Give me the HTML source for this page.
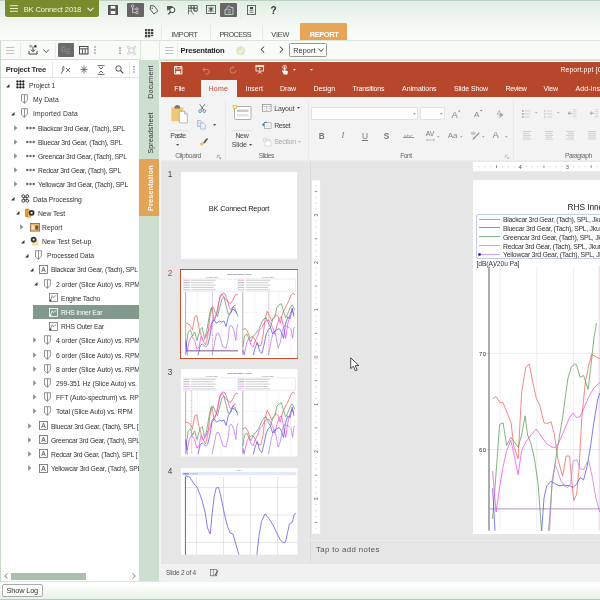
<!DOCTYPE html>
<html><head><meta charset="utf-8"><title>BK Connect 2018</title>
<style>
*{box-sizing:border-box;margin:0;padding:0}
html,body{width:600px;height:600px;overflow:hidden;background:#fff}
body{font-family:"Liberation Sans",sans-serif;font-size:7px;color:#333;position:relative}
.abs,.ic,.t{position:absolute}
.ic{overflow:visible}
.t{white-space:nowrap}
#w{position:absolute;left:0;top:0;width:600px;height:600px;will-change:transform}
</style></head><body><div id="w">
<div class="abs" style="left:0px;top:0px;width:600px;height:40px;background:linear-gradient(#e1eee3 0,#eaf4ec 35%,#f6faf6 75%,#fafcfa 100%);"></div>
<div class="abs" style="left:0px;top:0px;width:600px;height:1px;background:#bfd0c0;"></div>
<div class="abs" style="left:5px;top:0px;width:94px;height:17px;background:#788b2f;border-radius:0 0 2.5px 2.5px"></div>
<svg class="ic" style="left:10px;top:5px" width="8" height="7" viewBox="0 0 8 7"><path d="M0 .7H8M0 3.5H8M0 6.3H8" stroke="#e9efd3" stroke-width="1"/></svg>
<div class="t" style="left:23.70px;top:3.60px;font-size:7.6px;line-height:12px;color:#f1f5e2;letter-spacing:-0.138px;">BK Connect 2018</div>
<svg class="ic" style="left:87.3px;top:7.2px" width="6.5" height="5" viewBox="0 0 6.5 5"><path d="M.6 .8L3.5 3.8L6.4 .8" fill="none" stroke="#f1f5e2" stroke-width="1.1"/></svg>
<div class="abs" style="left:124.5px;top:1px;width:1px;height:18px;background:#e6efe4;"></div>
<div class="abs" style="left:181.5px;top:1px;width:1px;height:18px;background:#e6efe4;"></div>
<div class="abs" style="left:240px;top:1px;width:1px;height:18px;background:#e6efe4;"></div>
<div class="abs" style="left:262px;top:1px;width:1px;height:18px;background:#e6efe4;"></div>
<svg class="ic" style="left:108.3px;top:4.9px" width="10" height="10" viewBox="0 0 10 10"><rect x=".5" y=".5" width="9" height="9" fill="#f4f9f4" stroke="#555" stroke-width="1"/><rect x=".5" y=".5" width="2.2" height="9" fill="#555"/><rect x="7.3" y=".5" width="2.2" height="9" fill="#555"/><rect x="2.5" y="3.6" width="5" height="2.4" fill="#555"/></svg>
<div class="abs" style="left:127px;top:2.5px;width:16.5px;height:14px;background:#666;border-radius:1px"></div>
<svg class="ic" style="left:130px;top:4px" width="10" height="11" viewBox="0 0 10 11"><circle cx="2.5" cy="2" r="1.3" fill="none" stroke="#ddd" stroke-width=".7"/><circle cx="7" cy="5" r="1.2" fill="none" stroke="#ddd" stroke-width=".7"/><circle cx="7" cy="8.6" r="1.2" fill="none" stroke="#ddd" stroke-width=".7"/><path d="M2.5 3.3V8.6H5.8M2.5 5H5.8" fill="none" stroke="#ddd" stroke-width=".7"/></svg>
<svg class="ic" style="left:148.5px;top:4.5px" width="10" height="10" viewBox="0 0 10 10"><path d="M1 1H4.6L9 5.4L5.4 9L1 4.6Z" fill="none" stroke="#555" stroke-width=".9" transform="rotate(8 5 5)"/><circle cx="3.2" cy="3.2" r=".8" fill="#555"/></svg>
<svg class="ic" style="left:166px;top:4.5px" width="11" height="10" viewBox="0 0 11 10"><path d="M1 1H6.5V4.5H3L1.4 6V4.5H1Z" fill="#555"/><circle cx="6.3" cy="5" r="2.6" fill="#f4f9f3" stroke="#444" stroke-width="1"/><path d="M4.6 7L2.2 9.4" stroke="#444" stroke-width="1.2"/></svg>
<svg class="ic" style="left:188.2px;top:4.6px" width="10" height="10" viewBox="0 0 10 10"><path d="M.5 .5H3.2V3.2H.5ZM3.2 .5H6V3.2H3.2ZM6 .5H9.3V3.2H6ZM.5 3.2H3.2V6H.5ZM3.2 3.2H6V6M6 3.2H9.3V6H6ZM.5 6V9.5M3.2 6L5.4 9.4M6 6H9.3" fill="none" stroke="#555" stroke-width=".8"/></svg>
<svg class="ic" style="left:205.9px;top:5px" width="9.6" height="8.8" viewBox="0 0 9.6 8.8"><rect x=".5" y=".5" width="9" height="8" fill="none" stroke="#555" stroke-width=".9"/><path d="M2 3H8M2 6H8M5 1.5V7.5" stroke="#555" stroke-width=".7"/><rect x="3.6" y="3" width="2.8" height="2.6" fill="#555"/></svg>
<div class="abs" style="left:220px;top:2.5px;width:17px;height:14px;background:#666;border-radius:1px"></div>
<svg class="ic" style="left:223.5px;top:4.5px" width="10" height="10" viewBox="0 0 10 10"><path d="M1 9.5V4.5H3V2.5L5 .8L7 2.5H9V9.5Z" fill="none" stroke="#ddd" stroke-width=".8"/><path d="M3.6 4.5H7M3.6 6.2H7M3.6 7.9H7" stroke="#ccc" stroke-width=".6"/></svg>
<svg class="ic" style="left:246.5px;top:4.5px" width="9" height="10" viewBox="0 0 9 10"><rect x=".5" y=".5" width="8" height="9" fill="none" stroke="#555" stroke-width=".9"/><rect x="3" y="2" width="3" height="2.2" fill="#444"/><path d="M2.6 5.6H6.4M2.6 7.4H6.4" stroke="#555" stroke-width=".7"/></svg>
<div class="t" style="left:270.40px;top:5.20px;font-size:10px;line-height:12px;color:#333;letter-spacing:0.000px;font-weight:bold;">?</div>
<svg class="ic" style="left:145.2px;top:28.8px" width="8.2" height="8.2" viewBox="0 0 8.2 8.2"><rect x="0" y="0" width="2.3" height="2.3" fill="#444"/><rect x="0" y="3" width="2.3" height="2.3" fill="#444"/><rect x="0" y="6" width="2.3" height="2.3" fill="#444"/><rect x="3" y="0" width="2.3" height="2.3" fill="#444"/><rect x="3" y="3" width="2.3" height="2.3" fill="#444"/><rect x="3" y="6" width="2.3" height="2.3" fill="#444"/><rect x="6" y="0" width="2.3" height="2.3" fill="#444"/><rect x="6" y="3" width="2.3" height="2.3" fill="#444"/><rect x="6" y="6" width="2.3" height="1.2" fill="#444"/></svg>
<div class="abs" style="left:160.5px;top:25px;width:1px;height:15px;background:#e3ece1;"></div>
<div class="abs" style="left:209.5px;top:25px;width:1px;height:15px;background:#e3ece1;"></div>
<div class="abs" style="left:261.5px;top:25px;width:1px;height:15px;background:#e3ece1;"></div>
<div class="t" style="left:171.30px;top:28.60px;font-size:7.3px;line-height:12px;color:#444;letter-spacing:-0.293px;">IMPORT</div>
<div class="t" style="left:219.60px;top:28.60px;font-size:7.3px;line-height:12px;color:#444;letter-spacing:-0.600px;">PROCESS</div>
<div class="t" style="left:271.30px;top:28.60px;font-size:7.3px;line-height:12px;color:#444;letter-spacing:-0.164px;">VIEW</div>
<div class="abs" style="left:299.7px;top:22.5px;width:47px;height:18px;background:#e6a456;border-radius:1px 1px 0 0"></div>
<div class="t" style="left:309.80px;top:28.80px;font-size:7.4px;line-height:12px;color:#fff;letter-spacing:-0.373px;font-weight:bold;">REPORT</div>
<div class="abs" style="left:0px;top:40px;width:600px;height:1px;background:#d9e5d7;"></div>
<div class="abs" style="left:0px;top:41px;width:600px;height:19px;background:#f8fbf8;"></div>
<div class="abs" style="left:0px;top:59px;width:140px;height:1px;background:#d2e1ce;"></div>
<div class="abs" style="left:159px;top:59px;width:441px;height:1.6px;background:linear-gradient(#e3e9e2,#cfd6cf);"></div>
<div class="abs" style="left:139.5px;top:41px;width:1px;height:19px;background:#dfe9dc;"></div>
<div class="abs" style="left:158.5px;top:41px;width:1px;height:19px;background:#dfe9dc;"></div>
<svg class="ic" style="left:5.5px;top:46.5px" width="8.5" height="7" viewBox="0 0 8.5 7"><path d="M0 .5H8.5M0 3.5H8.5M0 6.5H8.5" stroke="#b5b5b5" stroke-width=".8"/></svg>
<div class="abs" style="left:19.5px;top:43px;width:1px;height:15px;background:#e6ece4;"></div>
<svg class="ic" style="left:28px;top:45px" width="10" height="10" viewBox="0 0 10 10"><path d="M1 6V9H9V6" fill="none" stroke="#444" stroke-width="1"/><path d="M5 1.5V6.5M2.8 4.6L5 6.8L7.2 4.6" fill="none" stroke="#444" stroke-width="1"/><circle cx="2.6" cy="1.2" r="1" fill="none" stroke="#444" stroke-width=".6"/><rect x="6.3" y=".2" width="2.2" height="2.2" fill="#222"/></svg>
<svg class="ic" style="left:43px;top:48.6px" width="6.5" height="4.5" viewBox="0 0 6.5 4.5"><path d="M.5 .6L3.25 3.5L6 .6" fill="none" stroke="#444" stroke-width=".9"/></svg>
<div class="abs" style="left:55px;top:43px;width:1px;height:15px;background:#e6ece4;"></div>
<div class="abs" style="left:57.5px;top:43px;width:16.5px;height:13.5px;background:#6b6b6b;border-radius:1px"></div>
<svg class="ic" style="left:61px;top:45.5px" width="10" height="9" viewBox="0 0 10 9"><path d="M1 1H4M3 3.2H9M3 5.4H9M5 7.6H9M1 1V5.4H2.5" fill="none" stroke="#999" stroke-width=".7"/></svg>
<svg class="ic" style="left:79px;top:45.8px" width="9.5" height="8.5" viewBox="0 0 9.5 8.5"><rect x=".5" y=".5" width="8.5" height="7.5" fill="none" stroke="#444" stroke-width="1"/><path d="M.5 2.8H9M3.4 2.8V8M6.2 2.8V8" stroke="#444" stroke-width=".9"/></svg>
<svg class="ic" style="left:93.5px;top:46px" width="2" height="8" viewBox="0 0 2 8"><circle cx="1" cy="1" r=".8" fill="#777"/><circle cx="1" cy="4" r=".8" fill="#777"/><circle cx="1" cy="7" r=".8" fill="#777"/></svg>
<svg class="ic" style="left:118.5px;top:46.5px" width="2" height="7" viewBox="0 0 2 7"><circle cx="1" cy="1" r=".75" fill="#555"/><circle cx="1" cy="3.5" r=".75" fill="#888"/><circle cx="1" cy="6" r=".75" fill="#555"/></svg>
<svg class="ic" style="left:126.5px;top:45.5px" width="9" height="9" viewBox="0 0 9 9"><rect x="2" y="2" width="5" height="5" fill="none" stroke="#bbb" stroke-width=".8"/><path d="M.4 2.4V.4H2.4M6.6 .4H8.6V2.4M8.6 6.6V8.6H6.6M2.4 8.6H.4V6.6" fill="none" stroke="#ccc" stroke-width=".8"/></svg>
<svg class="ic" style="left:164.5px;top:46.5px" width="8.5" height="7" viewBox="0 0 8.5 7"><path d="M0 .5H8.5M0 3.5H8.5M0 6.5H8.5" stroke="#b5b5b5" stroke-width=".8"/></svg>
<div class="abs" style="left:176.5px;top:43px;width:1px;height:15px;background:#e9efe7;"></div>
<div class="t" style="left:180.50px;top:44.80px;font-size:7.6px;line-height:12px;color:#222;letter-spacing:-0.170px;font-weight:bold;">Presentation</div>
<svg class="ic" style="left:235.5px;top:45.5px" width="9.5" height="9.5" viewBox="0 0 9.5 9.5"><circle cx="4.75" cy="4.75" r="4.5" fill="#dce8c6"/><path d="M2.6 4.9L4.2 6.5L7 3.3" fill="none" stroke="#f7faef" stroke-width="1.1"/></svg>
<svg class="ic" style="left:259.6px;top:46.2px" width="5" height="7" viewBox="0 0 5 7"><path d="M4.2 .6L1 3.5L4.2 6.4" fill="none" stroke="#333" stroke-width="1"/></svg>
<svg class="ic" style="left:278.7px;top:46.2px" width="5" height="7" viewBox="0 0 5 7"><path d="M.8 .6L4 3.5L.8 6.4" fill="none" stroke="#333" stroke-width="1"/></svg>
<div class="abs" style="left:289.3px;top:43px;width:37.5px;height:13.8px;background:#fff;border:1px solid #999;border-radius:1.5px"></div>
<div class="t" style="left:293.20px;top:44.60px;font-size:7.3px;line-height:12px;color:#333;letter-spacing:0.098px;">Report</div>
<svg class="ic" style="left:318.3px;top:48.2px" width="6" height="4.5" viewBox="0 0 6 4.5"><path d="M.5 .6L3 3.4L5.5 .6" fill="none" stroke="#333" stroke-width=".9"/></svg>
<div class="abs" style="left:0px;top:60px;width:139px;height:18px;background:#fff;"></div>
<div class="t" style="left:5.80px;top:63.50px;font-size:7.7px;line-height:12px;color:#333;letter-spacing:-0.315px;font-weight:bold;">Project Tree</div>
<div class="abs" style="left:0px;top:77.3px;width:139px;height:0.9px;background:#dce8da;"></div>
<div class="abs" style="left:51.5px;top:62px;width:1px;height:15px;background:#e3e9e1;"></div>
<div class="abs" style="left:128.5px;top:62px;width:1px;height:15px;background:#e3e9e1;"></div>
<svg class="ic" style="left:60px;top:64.5px" width="11" height="10" viewBox="0 0 11 10"><path d="M1 9L3 5.5M3 5.5C2 4 2.6 2.2 3.6 1.2C4.2 2.6 4.2 4.4 3 5.5" fill="none" stroke="#444" stroke-width=".7"/><path d="M6 3L10 7.2M10 3L6 7.2" stroke="#444" stroke-width=".8"/></svg>
<svg class="ic" style="left:79.5px;top:64.8px" width="8" height="9" viewBox="0 0 8 9"><path d="M4 .3V8.7M.4 4.5H7.6M1.4 1.6L6.6 7.4M6.6 1.6L1.4 7.4" stroke="#444" stroke-width=".65"/></svg>
<svg class="ic" style="left:97px;top:64.5px" width="8" height="10" viewBox="0 0 8 10"><path d="M.5 .6H7.5M.5 9.4H7.5" stroke="#444" stroke-width=".8"/><path d="M2 2L4 4L6 2M2 8L4 6L6 8" fill="none" stroke="#444" stroke-width=".8"/></svg>
<svg class="ic" style="left:114.5px;top:65px" width="9" height="9" viewBox="0 0 9 9"><circle cx="3.5" cy="3.5" r="2.7" fill="none" stroke="#444" stroke-width=".9"/><path d="M5.5 5.5L8.3 8.3" stroke="#444" stroke-width="1.1"/></svg>
<svg class="ic" style="left:133px;top:66px" width="2" height="7" viewBox="0 0 2 7"><circle cx="1" cy=".9" r=".8" fill="#888"/><circle cx="1" cy="3.5" r=".8" fill="#888"/><circle cx="1" cy="6.1" r=".8" fill="#888"/></svg>
<div class="abs" style="left:0;top:78px;width:139px;height:492px;overflow:hidden;background:#fff"><div class="abs" style="left:0;top:-78px;width:300px;height:600px">
<svg class="ic" style="left:6.1000000000000005px;top:83.5px" width="3.6" height="3.6" viewBox="0 0 3.6 3.6"><path d="M3.5 .1V3.5H.1Z" fill="#333"/></svg>
<svg class="ic" style="left:16.4px;top:80.4px" width="8.8" height="8.8" viewBox="0 0 9.4 9.4"><circle cx="1.5" cy="1.5" r="1.2" fill="#222"/><circle cx="1.5" cy="4.7" r="1.2" fill="#222"/><circle cx="1.5" cy="7.9" r="1.2" fill="#222"/><circle cx="4.7" cy="1.5" r="1.2" fill="#222"/><circle cx="4.7" cy="4.7" r="1.2" fill="#222"/><circle cx="4.7" cy="7.9" r="1.2" fill="#222"/><circle cx="7.9" cy="1.5" r="1.2" fill="#222"/><circle cx="7.9" cy="4.7" r="1.2" fill="#222"/><circle cx="7.9" cy="7.9" r="1.2" fill="#222"/><path d="M1.5 1.5H8M1.5 4.7H8M1.5 7.9H8M1.5 1.5V8M4.7 1.5V8M7.9 1.5V8" stroke="#222" stroke-width=".5"/></svg>
<div class="t" style="left:29.00px;top:80.00px;font-size:6.8px;line-height:12px;color:#333;letter-spacing:-0.065px;">Project 1</div>

<svg class="ic" style="left:20.5px;top:94.2px" width="7" height="10" viewBox="0 0 7 10"><path d="M.5 .7H3.5V9.3L.5 7Z M3.5 .7H6.4V6L3.5 9.3" fill="none" stroke="#777" stroke-width=".8" stroke-linejoin="round"/></svg>
<div class="t" style="left:33.00px;top:94.19px;font-size:6.8px;line-height:12px;color:#333;letter-spacing:0.062px;">My Data</div>
<svg class="ic" style="left:10.7px;top:111.9px" width="3.6" height="3.6" viewBox="0 0 3.6 3.6"><path d="M3.5 .1V3.5H.1Z" fill="#333"/></svg>
<svg class="ic" style="left:20.5px;top:108.4px" width="7" height="10" viewBox="0 0 7 10"><path d="M.5 .7H3.5V9.3L.5 7Z M3.5 .7H6.4V6L3.5 9.3" fill="none" stroke="#777" stroke-width=".8" stroke-linejoin="round"/></svg>
<div class="t" style="left:33.00px;top:108.38px;font-size:6.8px;line-height:12px;color:#333;letter-spacing:0.147px;">Imported Data</div>
<svg class="ic" style="left:14.100000000000001px;top:124.5px" width="3.4" height="6" viewBox="0 0 3.4 6"><path d="M.2 .2L3.3 3L.2 5.8Z" fill="#8a8a8a"/></svg>
<svg class="ic" style="left:26px;top:125.6px" width="9" height="4" viewBox="0 0 9 4"><circle cx="1.3" cy="2" r="1.2" fill="#666"/><circle cx="4.5" cy="2" r="1.2" fill="#666"/><circle cx="7.7" cy="2" r="1.2" fill="#666"/></svg>
<div class="t" style="left:38.00px;top:122.57px;font-size:6.8px;line-height:12px;color:#333;letter-spacing:-0.233px;">Blackcar 3rd Gear, (Tach), SPL</div>
<svg class="ic" style="left:14.100000000000001px;top:138.70000000000002px" width="3.4" height="6" viewBox="0 0 3.4 6"><path d="M.2 .2L3.3 3L.2 5.8Z" fill="#8a8a8a"/></svg>
<svg class="ic" style="left:26px;top:139.8px" width="9" height="4" viewBox="0 0 9 4"><circle cx="1.3" cy="2" r="1.2" fill="#666"/><circle cx="4.5" cy="2" r="1.2" fill="#666"/><circle cx="7.7" cy="2" r="1.2" fill="#666"/></svg>
<div class="t" style="left:38.00px;top:136.76px;font-size:6.8px;line-height:12px;color:#333;letter-spacing:-0.223px;">Bluecar 3rd Gear, (Tach), SPL</div>
<svg class="ic" style="left:14.100000000000001px;top:152.8px" width="3.4" height="6" viewBox="0 0 3.4 6"><path d="M.2 .2L3.3 3L.2 5.8Z" fill="#8a8a8a"/></svg>
<svg class="ic" style="left:26px;top:153.9px" width="9" height="4" viewBox="0 0 9 4"><circle cx="1.3" cy="2" r="1.2" fill="#666"/><circle cx="4.5" cy="2" r="1.2" fill="#666"/><circle cx="7.7" cy="2" r="1.2" fill="#666"/></svg>
<div class="t" style="left:38.00px;top:150.95px;font-size:6.8px;line-height:12px;color:#333;letter-spacing:-0.242px;">Greencar 3rd Gear, (Tach), SPL</div>
<svg class="ic" style="left:14.100000000000001px;top:167.0px" width="3.4" height="6" viewBox="0 0 3.4 6"><path d="M.2 .2L3.3 3L.2 5.8Z" fill="#8a8a8a"/></svg>
<svg class="ic" style="left:26px;top:168.1px" width="9" height="4" viewBox="0 0 9 4"><circle cx="1.3" cy="2" r="1.2" fill="#666"/><circle cx="4.5" cy="2" r="1.2" fill="#666"/><circle cx="7.7" cy="2" r="1.2" fill="#666"/></svg>
<div class="t" style="left:38.00px;top:165.14px;font-size:6.8px;line-height:12px;color:#333;letter-spacing:-0.235px;">Redcar 3rd Gear, (Tach), SPL</div>
<svg class="ic" style="left:14.100000000000001px;top:181.20000000000002px" width="3.4" height="6" viewBox="0 0 3.4 6"><path d="M.2 .2L3.3 3L.2 5.8Z" fill="#8a8a8a"/></svg>
<svg class="ic" style="left:26px;top:182.3px" width="9" height="4" viewBox="0 0 9 4"><circle cx="1.3" cy="2" r="1.2" fill="#666"/><circle cx="4.5" cy="2" r="1.2" fill="#666"/><circle cx="7.7" cy="2" r="1.2" fill="#666"/></svg>
<div class="t" style="left:38.00px;top:179.33px;font-size:6.8px;line-height:12px;color:#333;letter-spacing:-0.210px;">Yellowcar 3rd Gear, (Tach), SPL</div>
<svg class="ic" style="left:10.7px;top:197.0px" width="3.6" height="3.6" viewBox="0 0 3.6 3.6"><path d="M3.5 .1V3.5H.1Z" fill="#333"/></svg>
<svg class="ic" style="left:21px;top:194.0px" width="8.5" height="9" viewBox="0 0 8 9"><circle cx="2" cy="2.2" r="1.45" fill="none" stroke="#3a3a3a" stroke-width=".95"/><circle cx="6" cy="2.2" r="1.45" fill="none" stroke="#3a3a3a" stroke-width=".95"/><circle cx="2" cy="6.8" r="1.45" fill="none" stroke="#3a3a3a" stroke-width=".95"/><circle cx="6" cy="6.8" r="1.45" fill="none" stroke="#3a3a3a" stroke-width=".95"/><circle cx="4" cy="4.5" r="1.45" fill="none" stroke="#3a3a3a" stroke-width=".95"/></svg>
<div class="t" style="left:33.00px;top:193.52px;font-size:6.8px;line-height:12px;color:#333;letter-spacing:-0.076px;">Data Processing</div>
<svg class="ic" style="left:15.7px;top:211.2px" width="3.6" height="3.6" viewBox="0 0 3.6 3.6"><path d="M3.5 .1V3.5H.1Z" fill="#333"/></svg>
<svg class="ic" style="left:25px;top:207.7px" width="10" height="10" viewBox="0 0 10 10"><path d="M.5 1H3.6L4.4 2.2V9.4L.5 8.4Z" fill="#e2952c" stroke="#a86a14" stroke-width=".5"/><path d="M3 2.4H6V9.4H3Z" fill="#f0b95e"/><circle cx="6.6" cy="4.8" r="2.9" fill="#2e2e2e"/><circle cx="6.6" cy="4.8" r="1.1" fill="#fff"/></svg>
<div class="t" style="left:38.00px;top:207.71px;font-size:6.8px;line-height:12px;color:#333;letter-spacing:-0.105px;">New Test</div>
<svg class="ic" style="left:19.8px;top:223.8px" width="3.4" height="6" viewBox="0 0 3.4 6"><path d="M.2 .2L3.3 3L.2 5.8Z" fill="#8a8a8a"/></svg>
<svg class="ic" style="left:30px;top:222.9px" width="10" height="8.5" viewBox="0 0 10 8.5"><rect x=".4" y=".4" width="9.2" height="7.7" fill="#e9b96a" stroke="#8a6a3a" stroke-width=".8"/><rect x="1.5" y="2.6" width="3" height="4" fill="#f7e3bd"/><rect x="5.3" y="2.6" width="3" height="4" fill="#6b5536"/></svg>
<div class="t" style="left:42.00px;top:221.90px;font-size:6.8px;line-height:12px;color:#333;letter-spacing:0.015px;">Report</div>
<svg class="ic" style="left:20.7px;top:239.6px" width="3.6" height="3.6" viewBox="0 0 3.6 3.6"><path d="M3.5 .1V3.5H.1Z" fill="#333"/></svg>
<svg class="ic" style="left:30px;top:236.1px" width="9" height="10" viewBox="0 0 9 10"><rect x="2" y="3.5" width="6.5" height="6" fill="#f3dca8"/><circle cx="3.6" cy="3.6" r="2.9" fill="#333"/><circle cx="3.6" cy="3.6" r="1.1" fill="#f4e6c6"/></svg>
<div class="t" style="left:42.00px;top:236.09px;font-size:6.8px;line-height:12px;color:#333;letter-spacing:-0.034px;">New Test Set-up</div>
<svg class="ic" style="left:24.7px;top:253.8px" width="3.6" height="3.6" viewBox="0 0 3.6 3.6"><path d="M3.5 .1V3.5H.1Z" fill="#333"/></svg>
<svg class="ic" style="left:35px;top:250.3px" width="7" height="10" viewBox="0 0 7 10"><path d="M.5 .7H3.5V9.3L.5 7Z M3.5 .7H6.4V6L3.5 9.3" fill="none" stroke="#777" stroke-width=".8" stroke-linejoin="round"/></svg>
<div class="t" style="left:47.00px;top:250.28px;font-size:6.8px;line-height:12px;color:#333;letter-spacing:-0.099px;">Processed Data</div>
<svg class="ic" style="left:29.7px;top:268.0px" width="3.6" height="3.6" viewBox="0 0 3.6 3.6"><path d="M3.5 .1V3.5H.1Z" fill="#333"/></svg>
<svg class="ic" style="left:39px;top:265.0px" width="9" height="9" viewBox="0 0 9 9"><rect x=".5" y=".5" width="8" height="8" fill="none" stroke="#666" stroke-width=".8"/><path d="M2.6 7L4.5 2L6.4 7M3.3 5.3H5.7" fill="none" stroke="#555" stroke-width=".8"/></svg>
<div class="t" style="left:51.00px;top:264.47px;font-size:6.8px;line-height:12px;color:#333;letter-spacing:-0.226px;">Blackcar 3rd Gear, (Tach), SPL [</div>
<svg class="ic" style="left:33.7px;top:282.2px" width="3.6" height="3.6" viewBox="0 0 3.6 3.6"><path d="M3.5 .1V3.5H.1Z" fill="#333"/></svg>
<svg class="ic" style="left:43.5px;top:278.7px" width="7" height="10" viewBox="0 0 7 10"><path d="M.5 .7H3.5V9.3L.5 7Z M3.5 .7H6.4V6L3.5 9.3" fill="none" stroke="#777" stroke-width=".8" stroke-linejoin="round"/></svg>
<div class="t" style="left:56.00px;top:278.66px;font-size:6.8px;line-height:12px;color:#333;letter-spacing:-0.064px;">2 order (Slice Auto) vs. RPM</div>

<svg class="ic" style="left:49px;top:293.4px" width="9" height="9" viewBox="0 0 9 9"><rect x=".5" y=".5" width="8" height="8" fill="none" stroke="#777" stroke-width=".8"/><path d="M1.6 7.2L3.2 2.6L4.4 4.6L7.4 2.2" fill="none" stroke="#777" stroke-width=".8"/><circle cx="1.5" cy="7.3" r=".9" fill="#333"/></svg>
<div class="t" style="left:61.00px;top:292.85px;font-size:6.8px;line-height:12px;color:#333;letter-spacing:-0.153px;">Engine Tacho</div>
<div class="abs" style="left:33px;top:305.2px;width:107px;height:14.3px;background:#819a8b;"></div>

<svg class="ic" style="left:49px;top:307.5px" width="9" height="9" viewBox="0 0 9 9"><rect x=".5" y=".5" width="8" height="8" fill="none" stroke="#fff" stroke-width=".8"/><path d="M1.6 7.2L3.2 2.6L4.4 4.6L7.4 2.2" fill="none" stroke="#fff" stroke-width=".8"/><circle cx="1.5" cy="7.3" r=".9" fill="#fff"/></svg>
<div class="t" style="left:61.00px;top:307.04px;font-size:6.8px;line-height:12px;color:#fff;letter-spacing:-0.228px;">RHS Inner Ear</div>

<svg class="ic" style="left:49px;top:321.7px" width="9" height="9" viewBox="0 0 9 9"><rect x=".5" y=".5" width="8" height="8" fill="none" stroke="#777" stroke-width=".8"/><path d="M1.6 7.2L3.2 2.6L4.4 4.6L7.4 2.2" fill="none" stroke="#777" stroke-width=".8"/><circle cx="1.5" cy="7.3" r=".9" fill="#333"/></svg>
<div class="t" style="left:61.00px;top:321.23px;font-size:6.8px;line-height:12px;color:#333;letter-spacing:-0.210px;">RHS Outer Ear</div>
<svg class="ic" style="left:32.8px;top:337.29999999999995px" width="3.4" height="6" viewBox="0 0 3.4 6"><path d="M.2 .2L3.3 3L.2 5.8Z" fill="#8a8a8a"/></svg>
<svg class="ic" style="left:43.5px;top:335.4px" width="7" height="10" viewBox="0 0 7 10"><path d="M.5 .7H3.5V9.3L.5 7Z M3.5 .7H6.4V6L3.5 9.3" fill="none" stroke="#777" stroke-width=".8" stroke-linejoin="round"/></svg>
<div class="t" style="left:56.00px;top:335.42px;font-size:6.8px;line-height:12px;color:#333;letter-spacing:-0.064px;">4 order (Slice Auto) vs. RPM</div>
<svg class="ic" style="left:32.8px;top:351.5px" width="3.4" height="6" viewBox="0 0 3.4 6"><path d="M.2 .2L3.3 3L.2 5.8Z" fill="#8a8a8a"/></svg>
<svg class="ic" style="left:43.5px;top:349.6px" width="7" height="10" viewBox="0 0 7 10"><path d="M.5 .7H3.5V9.3L.5 7Z M3.5 .7H6.4V6L3.5 9.3" fill="none" stroke="#777" stroke-width=".8" stroke-linejoin="round"/></svg>
<div class="t" style="left:56.00px;top:349.61px;font-size:6.8px;line-height:12px;color:#333;letter-spacing:-0.064px;">6 order (Slice Auto) vs. RPM</div>
<svg class="ic" style="left:32.8px;top:365.7px" width="3.4" height="6" viewBox="0 0 3.4 6"><path d="M.2 .2L3.3 3L.2 5.8Z" fill="#8a8a8a"/></svg>
<svg class="ic" style="left:43.5px;top:363.8px" width="7" height="10" viewBox="0 0 7 10"><path d="M.5 .7H3.5V9.3L.5 7Z M3.5 .7H6.4V6L3.5 9.3" fill="none" stroke="#777" stroke-width=".8" stroke-linejoin="round"/></svg>
<div class="t" style="left:56.00px;top:363.80px;font-size:6.8px;line-height:12px;color:#333;letter-spacing:-0.064px;">8 order (Slice Auto) vs. RPM</div>
<svg class="ic" style="left:32.8px;top:379.9px" width="3.4" height="6" viewBox="0 0 3.4 6"><path d="M.2 .2L3.3 3L.2 5.8Z" fill="#8a8a8a"/></svg>
<svg class="ic" style="left:43.5px;top:378.0px" width="7" height="10" viewBox="0 0 7 10"><path d="M.5 .7H3.5V9.3L.5 7Z M3.5 .7H6.4V6L3.5 9.3" fill="none" stroke="#777" stroke-width=".8" stroke-linejoin="round"/></svg>
<div class="t" style="left:56.00px;top:377.99px;font-size:6.8px;line-height:12px;color:#333;letter-spacing:-0.054px;">299-351 Hz (Slice Auto) vs. RPM</div>
<svg class="ic" style="left:32.8px;top:394.09999999999997px" width="3.4" height="6" viewBox="0 0 3.4 6"><path d="M.2 .2L3.3 3L.2 5.8Z" fill="#8a8a8a"/></svg>
<svg class="ic" style="left:43.5px;top:392.2px" width="7" height="10" viewBox="0 0 7 10"><path d="M.5 .7H3.5V9.3L.5 7Z M3.5 .7H6.4V6L3.5 9.3" fill="none" stroke="#777" stroke-width=".8" stroke-linejoin="round"/></svg>
<div class="t" style="left:56.00px;top:392.18px;font-size:6.8px;line-height:12px;color:#333;letter-spacing:-0.082px;">FFT (Auto-spectrum) vs. RPM</div>
<svg class="ic" style="left:32.8px;top:408.29999999999995px" width="3.4" height="6" viewBox="0 0 3.4 6"><path d="M.2 .2L3.3 3L.2 5.8Z" fill="#8a8a8a"/></svg>
<svg class="ic" style="left:43.5px;top:406.4px" width="7" height="10" viewBox="0 0 7 10"><path d="M.5 .7H3.5V9.3L.5 7Z M3.5 .7H6.4V6L3.5 9.3" fill="none" stroke="#777" stroke-width=".8" stroke-linejoin="round"/></svg>
<div class="t" style="left:56.00px;top:406.37px;font-size:6.8px;line-height:12px;color:#333;letter-spacing:-0.081px;">Total (Slice Auto) vs. RPM</div>
<svg class="ic" style="left:27.900000000000002px;top:422.5px" width="3.4" height="6" viewBox="0 0 3.4 6"><path d="M.2 .2L3.3 3L.2 5.8Z" fill="#8a8a8a"/></svg>
<svg class="ic" style="left:39px;top:421.1px" width="9" height="9" viewBox="0 0 9 9"><rect x=".5" y=".5" width="8" height="8" fill="none" stroke="#666" stroke-width=".8"/><path d="M2.6 7L4.5 2L6.4 7M3.3 5.3H5.7" fill="none" stroke="#555" stroke-width=".8"/></svg>
<div class="t" style="left:51.00px;top:420.56px;font-size:6.8px;line-height:12px;color:#333;letter-spacing:-0.216px;">Bluecar 3rd Gear, (Tach), SPL [</div>
<svg class="ic" style="left:27.900000000000002px;top:436.7px" width="3.4" height="6" viewBox="0 0 3.4 6"><path d="M.2 .2L3.3 3L.2 5.8Z" fill="#8a8a8a"/></svg>
<svg class="ic" style="left:39px;top:435.3px" width="9" height="9" viewBox="0 0 9 9"><rect x=".5" y=".5" width="8" height="8" fill="none" stroke="#666" stroke-width=".8"/><path d="M2.6 7L4.5 2L6.4 7M3.3 5.3H5.7" fill="none" stroke="#555" stroke-width=".8"/></svg>
<div class="t" style="left:51.00px;top:434.75px;font-size:6.8px;line-height:12px;color:#333;letter-spacing:-0.235px;">Greencar 3rd Gear, (Tach), SPL [</div>
<svg class="ic" style="left:27.900000000000002px;top:450.79999999999995px" width="3.4" height="6" viewBox="0 0 3.4 6"><path d="M.2 .2L3.3 3L.2 5.8Z" fill="#8a8a8a"/></svg>
<svg class="ic" style="left:39px;top:449.4px" width="9" height="9" viewBox="0 0 9 9"><rect x=".5" y=".5" width="8" height="8" fill="none" stroke="#666" stroke-width=".8"/><path d="M2.6 7L4.5 2L6.4 7M3.3 5.3H5.7" fill="none" stroke="#555" stroke-width=".8"/></svg>
<div class="t" style="left:51.00px;top:448.94px;font-size:6.8px;line-height:12px;color:#333;letter-spacing:-0.228px;">Redcar 3rd Gear, (Tach), SPL [</div>
<svg class="ic" style="left:27.900000000000002px;top:465.0px" width="3.4" height="6" viewBox="0 0 3.4 6"><path d="M.2 .2L3.3 3L.2 5.8Z" fill="#8a8a8a"/></svg>
<svg class="ic" style="left:39px;top:463.6px" width="9" height="9" viewBox="0 0 9 9"><rect x=".5" y=".5" width="8" height="8" fill="none" stroke="#666" stroke-width=".8"/><path d="M2.6 7L4.5 2L6.4 7M3.3 5.3H5.7" fill="none" stroke="#555" stroke-width=".8"/></svg>
<div class="t" style="left:51.00px;top:463.13px;font-size:6.8px;line-height:12px;color:#333;letter-spacing:-0.204px;">Yellowcar 3rd Gear, (Tach), SPL [</div>
</div></div>
<div class="abs" style="left:0px;top:41px;width:1.2px;height:541px;background:#c9d8c9;"></div>
<div class="abs" style="left:139px;top:60px;width:1px;height:522px;background:#e6eee4;"></div>
<div class="abs" style="left:1px;top:570px;width:138px;height:12px;background:#fff;"></div>
<svg class="ic" style="left:3.5px;top:572.5px" width="4" height="6" viewBox="0 0 4 6"><path d="M3.4 .5L.7 3L3.4 5.5" fill="none" stroke="#555" stroke-width=".8"/></svg>
<svg class="ic" style="left:131.5px;top:572.5px" width="4" height="6" viewBox="0 0 4 6"><path d="M.6 .5L3.3 3L.6 5.5" fill="none" stroke="#555" stroke-width=".8"/></svg>
<div class="abs" style="left:10.9px;top:572.9px;width:75.3px;height:6.7px;background:#aac2ad;"></div>
<div class="abs" style="left:139.4px;top:60px;width:19.4px;height:522px;background:#cde0d0;"></div>
<div class="abs" style="left:158.8px;top:60px;width:2.2px;height:522px;background:#f1f4f2;"></div>
<div class="abs" style="left:139.4px;top:159.4px;width:19.4px;height:56.2px;background:#e4a457;"></div>
<div class="t" style="left:150.4px;top:82px;width:0;height:0"><div style="position:absolute;left:-16.65px;top:-6px;line-height:12px;font-size:7.2px;letter-spacing:0.061px;color:#333;white-space:nowrap;transform:rotate(-90deg);transform-origin:16.65px 6px">Document</div></div>
<div class="t" style="left:150.4px;top:132.7px;width:0;height:0"><div style="position:absolute;left:-20.50px;top:-6px;line-height:12px;font-size:7.2px;letter-spacing:0.015px;color:#333;white-space:nowrap;transform:rotate(-90deg);transform-origin:20.50px 6px">Spreadsheet</div></div>
<div class="t" style="left:150.4px;top:187.6px;width:0;height:0"><div style="position:absolute;left:-22.90px;top:-6px;line-height:12px;font-size:7.2px;letter-spacing:0.182px;color:#fff;font-weight:bold;white-space:nowrap;transform:rotate(-90deg);transform-origin:22.90px 6px">Presentation</div></div>
<div class="abs" style="left:161px;top:61.5px;width:439px;height:35.5px;background:#b7472a;"></div>
<div class="abs" style="left:161px;top:97px;width:439px;height:62.8px;background:#f3f3f3;"></div>
<div class="abs" style="left:161px;top:159.8px;width:439px;height:2px;background:linear-gradient(#ececec,#e8e8e8);"></div>
<div class="abs" style="left:161px;top:161.5px;width:439px;height:403px;background:#e6e6e6;"></div>
<svg class="ic" style="left:174px;top:66px" width="8.5" height="8.5" viewBox="0 0 8.5 8.5"><path d="M.6 .6H7.9V7.9H.6Z" fill="none" stroke="#fff" stroke-width="1"/><rect x="2.2" y="5" width="4.1" height="2.9" fill="#fff"/><path d="M2.2 .8V3H6.3V.8" fill="none" stroke="#fff" stroke-width=".8"/></svg>
<svg class="ic" style="left:201.5px;top:66.5px" width="8" height="7.5" viewBox="0 0 8 7.5"><path d="M.8 2.6H5C8 2.6 8 7 5 7H3.6" fill="none" stroke="#d58b76" stroke-width=".9"/><path d="M3 .5L.8 2.6L3 4.7" fill="none" stroke="#d58b76" stroke-width=".9"/></svg>
<svg class="ic" style="left:228.5px;top:66px" width="8" height="8" viewBox="0 0 8 8"><path d="M4 1.2A3 3 0 1 0 7 4.2" fill="none" stroke="#d58b76" stroke-width=".9"/><path d="M3.6 0L5.2 1.3L3.6 2.6" fill="none" stroke="#d58b76" stroke-width=".8"/></svg>
<svg class="ic" style="left:255px;top:65px" width="9.5" height="9" viewBox="0 0 9.5 9"><path d="M.3 .6H9.2" stroke="#fff" stroke-width=".9"/><rect x="1" y="1.4" width="7.5" height="4.6" fill="none" stroke="#fff" stroke-width=".8"/><path d="M4.75 6V7.4M2.8 8.6L4.75 7.2L6.7 8.6" fill="none" stroke="#fff" stroke-width=".7"/><path d="M4 2.6L6 3.7L4 4.8Z" fill="#fff"/></svg>
<svg class="ic" style="left:281.3px;top:64.6px" width="7.5" height="10.5" viewBox="0 0 7.5 10.5"><circle cx="3.6" cy="2.2" r="1.9" fill="none" stroke="#fff" stroke-width=".7"/><path d="M3.1 1.6V6L1.6 5.2L.9 6L3 9.6H6.4L6.9 6.2L4.3 5.4V1.6Z" fill="#fff"/></svg>
<svg class="ic" style="left:292.9px;top:69.2px" width="2.8" height="1.9" viewBox="0 0 2.8 1.9"><path d="M0 0H2.8L1.4 1.8Z" fill="#fff"/></svg>
<svg class="ic" style="left:310px;top:69.2px" width="2.8" height="1.9" viewBox="0 0 2.8 1.9"><path d="M0 0H2.8L1.4 1.8Z" fill="#fff"/></svg>
<div class="t" style="left:560.50px;top:64.20px;font-size:6.9px;line-height:12px;color:#fff;letter-spacing:0.074px;">Report.ppt [C</div>
<div class="abs" style="left:200.8px;top:80px;width:36px;height:17.5px;background:#f3f3f3;"></div>
<div class="t" style="left:174.30px;top:82.80px;font-size:7px;line-height:12px;color:#fff;letter-spacing:-0.145px;">File</div>
<div class="t" style="left:208.60px;top:82.80px;font-size:7px;line-height:12px;color:#c2482a;letter-spacing:0.182px;">Home</div>
<div class="t" style="left:245.50px;top:82.80px;font-size:7px;line-height:12px;color:#fff;letter-spacing:-0.001px;">Insert</div>
<div class="t" style="left:280.00px;top:82.80px;font-size:7px;line-height:12px;color:#fff;letter-spacing:-0.084px;">Draw</div>
<div class="t" style="left:313.50px;top:82.80px;font-size:7px;line-height:12px;color:#fff;letter-spacing:-0.048px;">Design</div>
<div class="t" style="left:352.50px;top:82.80px;font-size:7px;line-height:12px;color:#fff;letter-spacing:-0.198px;">Transitions</div>
<div class="t" style="left:402.00px;top:82.80px;font-size:7px;line-height:12px;color:#fff;letter-spacing:-0.013px;">Animations</div>
<div class="t" style="left:454.00px;top:82.80px;font-size:7px;line-height:12px;color:#fff;letter-spacing:-0.102px;">Slide Show</div>
<div class="t" style="left:505.50px;top:82.80px;font-size:7px;line-height:12px;color:#fff;letter-spacing:-0.325px;">Review</div>
<div class="t" style="left:543.50px;top:82.80px;font-size:7px;line-height:12px;color:#fff;letter-spacing:-0.137px;">View</div>
<div class="t" style="left:575.50px;top:82.80px;font-size:7px;line-height:12px;color:#fff;letter-spacing:0.109px;">Add-ins</div>
<div class="abs" style="left:225.2px;top:100px;width:1px;height:59px;background:#e8e8e8;"></div>
<div class="abs" style="left:308px;top:100px;width:1px;height:59px;background:#e8e8e8;"></div>
<div class="abs" style="left:513px;top:100px;width:1px;height:59px;background:#e8e8e8;"></div>
<svg class="ic" style="left:171px;top:104.5px" width="17" height="18.5" viewBox="0 0 17 18.5"><rect x=".3" y="2.2" width="12" height="14" rx=".6" fill="#efc873"/><rect x="3.6" y=".8" width="5.4" height="2.8" rx=".5" fill="#777"/><rect x="5.2" y="0" width="2.2" height="1.6" fill="#777"/><path d="M8.3 6.3H13.6L16.3 9V17.9H8.3Z" fill="#fff" stroke="#999" stroke-width=".7"/><path d="M13.6 6.3V9H16.3" fill="none" stroke="#999" stroke-width=".6"/></svg>
<div class="abs" style="left:167.7px;top:129.5px;width:21px;height:0.8px;background:#e4e4e4;"></div>
<div class="t" style="left:170.20px;top:129.70px;font-size:7px;line-height:12px;color:#444;letter-spacing:-0.480px;">Paste</div>
<svg class="ic" style="left:176.2px;top:143.8px" width="3.2" height="2" viewBox="0 0 3.2 2"><path d="M0 0H3.2L1.6 2Z" fill="#555"/></svg>
<svg class="ic" style="left:198px;top:104px" width="8.5" height="9" viewBox="0 0 8.5 9"><path d="M1.8 .3L5.6 6M6.7 .3L2.9 6" stroke="#555" stroke-width=".8"/><circle cx="2.1" cy="7.1" r="1.4" fill="none" stroke="#4a7ab5" stroke-width=".8"/><circle cx="6.4" cy="7.1" r="1.4" fill="none" stroke="#4a7ab5" stroke-width=".8"/></svg>
<svg class="ic" style="left:197.2px;top:120px" width="9" height="9.5" viewBox="0 0 9 9.5"><path d="M.5 .5H3.4L5 2V6.5H.5Z" fill="#dbe6f3" stroke="#8fa5c2" stroke-width=".6"/><path d="M3.6 3H6.6L8.3 4.6V9H3.6Z" fill="#eef3fa" stroke="#8fa5c2" stroke-width=".6"/></svg>
<svg class="ic" style="left:213.2px;top:124px" width="3.2" height="2" viewBox="0 0 3.2 2"><path d="M0 0H3.2L1.6 2Z" fill="#555"/></svg>
<svg class="ic" style="left:198.5px;top:137.5px" width="9" height="8" viewBox="0 0 9 8"><path d="M8.6 .6L5.8 3.2" stroke="#555" stroke-width="1.5"/><path d="M6.2 2.2L4.2 4.6L5.4 5.6L7.4 3.4Z" fill="#555"/><path d="M3.8 4L.5 5.8L2.4 8L5.4 5.6Z" fill="#efc060"/></svg>
<div class="t" style="left:175.20px;top:150.00px;font-size:6.7px;line-height:12px;color:#666;letter-spacing:-0.320px;">Clipboard</div>
<svg class="ic" style="left:217px;top:155px" width="4" height="4" viewBox="0 0 4 4"><path d="M.3 3V.3H3" fill="none" stroke="#888" stroke-width=".6"/><path d="M1.6 1.6L3.6 3.6M3.6 2.2V3.6H2.2" fill="none" stroke="#888" stroke-width=".6"/></svg>
<svg class="ic" style="left:233px;top:104.5px" width="18.5" height="15" viewBox="0 0 18.5 15"><rect x="1.5" y="1.5" width="16.5" height="13" rx=".8" fill="#fff" stroke="#999" stroke-width=".8"/><rect x="4" y="4.5" width="11.5" height="2.6" fill="#c9c9c9"/><rect x="4" y="9" width="11.5" height="2.6" fill="#e4e4e4"/><rect x=".2" y=".2" width="3.4" height="3.4" fill="#fbe6b4" stroke="#e9b74c" stroke-width=".7"/></svg>
<div class="abs" style="left:231px;top:129.5px;width:21.5px;height:0.8px;background:#e4e4e4;"></div>
<div class="t" style="left:235.40px;top:129.70px;font-size:7px;line-height:12px;color:#444;letter-spacing:-0.335px;">New</div>
<div class="t" style="left:231.80px;top:138.90px;font-size:7px;line-height:12px;color:#444;letter-spacing:-0.113px;">Slide</div>
<svg class="ic" style="left:249px;top:144.2px" width="3.2" height="2" viewBox="0 0 3.2 2"><path d="M0 0H3.2L1.6 2Z" fill="#555"/></svg>
<svg class="ic" style="left:261.7px;top:104.2px" width="9.5" height="7.6" viewBox="0 0 9.5 7.6"><rect x=".4" y=".4" width="8.7" height="6.8" fill="#fff" stroke="#888" stroke-width=".7"/><path d="M.4 2.4H9.1M4.7 2.4V7.2" stroke="#999" stroke-width=".6"/><path d="M1.6 4.9H3.4M6 4.9H8" stroke="#999" stroke-width=".6"/></svg>
<div class="t" style="left:274.20px;top:102.50px;font-size:7px;line-height:12px;color:#444;letter-spacing:-0.170px;">Layout</div>
<svg class="ic" style="left:296.5px;top:107.3px" width="3.2" height="2" viewBox="0 0 3.2 2"><path d="M0 0H3.2L1.6 2Z" fill="#555"/></svg>
<svg class="ic" style="left:261.7px;top:121px" width="9.5" height="8" viewBox="0 0 9.5 8"><rect x="2.4" y="1.8" width="6.7" height="5.8" fill="#fff" stroke="#999" stroke-width=".7"/><path d="M3.6 5.6H7.8M3.6 4H7.8" stroke="#bbb" stroke-width=".5"/><path d="M1.2 4.6C.8 2 3 .6 5.2 1.6" fill="none" stroke="#2b6cb5" stroke-width="1"/><path d="M0 3.2L1.2 5L3 3.8Z" fill="#2b6cb5"/></svg>
<div class="t" style="left:274.20px;top:119.70px;font-size:7px;line-height:12px;color:#444;letter-spacing:-0.497px;">Reset</div>
<svg class="ic" style="left:262.5px;top:137.5px" width="8.5" height="8.5" viewBox="0 0 8.5 8.5"><rect x="2" y="3" width="6" height="5" fill="#fff" stroke="#e2c8cc" stroke-width=".7"/><rect x=".4" y=".4" width="3" height="2.6" fill="none" stroke="#ccc" stroke-width=".6"/><path d="M3.4 1.6H7.6" stroke="#e2b8bf" stroke-width=".7"/></svg>
<div class="t" style="left:274.20px;top:135.90px;font-size:7px;line-height:12px;color:#aaa;letter-spacing:-0.250px;">Section</div>
<svg class="ic" style="left:298.3px;top:141px" width="3.2" height="2" viewBox="0 0 3.2 2"><path d="M0 0H3.2L1.6 2Z" fill="#bbb"/></svg>
<div class="t" style="left:258.80px;top:150.00px;font-size:6.7px;line-height:12px;color:#666;letter-spacing:-0.541px;">Slides</div>
<div class="abs" style="left:311.3px;top:106.7px;width:106.5px;height:13.8px;background:#fff;border:.7px solid #e2e2e2"></div>
<div class="abs" style="left:419.6px;top:106.7px;width:25px;height:13.8px;background:#fff;border:.7px solid #e2e2e2"></div>
<svg class="ic" style="left:412.7px;top:113px" width="2.8" height="1.8" viewBox="0 0 2.8 1.8"><path d="M0 0H2.8L1.4 1.8Z" fill="#999"/></svg>
<svg class="ic" style="left:439.5px;top:113px" width="2.8" height="1.8" viewBox="0 0 2.8 1.8"><path d="M0 0H2.8L1.4 1.8Z" fill="#999"/></svg>
<div class="t" style="left:451.50px;top:108.50px;font-size:9.5px;line-height:12px;color:#858585;letter-spacing:0.000px;">A</div>
<svg class="ic" style="left:458.3px;top:109.5px" width="2.4" height="1.6" viewBox="0 0 2.4 1.6"><path d="M0 1.6L1.2 0L2.4 1.6Z" fill="#777"/></svg>
<div class="t" style="left:474.00px;top:109.00px;font-size:8px;line-height:12px;color:#858585;letter-spacing:0.000px;">A</div>
<svg class="ic" style="left:479.6px;top:109.8px" width="2.4" height="1.6" viewBox="0 0 2.4 1.6"><path d="M0 0L1.2 1.6L2.4 0Z" fill="#777"/></svg>
<svg class="ic" style="left:495.5px;top:109.5px" width="8" height="8.5" viewBox="0 0 8 8.5"><path d="M3.4 .4L1.2 4.2H4.8Z" fill="none" stroke="#999" stroke-width=".7"/><path d="M3 5L6 3L7.4 5.2L4.4 7.6Z" fill="#aaa"/><path d="M1.4 6.4L3 8L4.4 7.6" fill="none" stroke="#bbb" stroke-width=".6"/></svg>
<div class="t" style="left:318.80px;top:130.00px;font-size:8.3px;line-height:12px;color:#777;letter-spacing:0.000px;font-weight:bold;">B</div>
<div class="t" style="left:341.60px;top:130.00px;font-size:8.3px;line-height:12px;color:#777;letter-spacing:0.000px;font-style:italic;font-family:'Liberation Serif',serif;">I</div>
<div class="t" style="left:362.00px;top:130.00px;font-size:8.3px;line-height:12px;color:#777;letter-spacing:0.000px;text-decoration:underline;">U</div>
<div class="t" style="left:383.70px;top:130.00px;font-size:8.3px;line-height:12px;color:#777;letter-spacing:0.000px;font-weight:bold;">S</div>
<div class="t" style="left:403.50px;top:129.90px;font-size:5.8px;line-height:12px;color:#999;letter-spacing:0.050px;">abc</div>
<div class="abs" style="left:403px;top:136.6px;width:10.5px;height:0.5px;background:#999;"></div>
<div class="t" style="left:425.80px;top:128.20px;font-size:6.8px;line-height:12px;color:#777;letter-spacing:-0.083px;">AV</div>
<svg class="ic" style="left:425.5px;top:138.7px" width="9" height="2" viewBox="0 0 9 2"><path d="M.5 1H8.5M1.6 .2L.5 1L1.6 1.8M7.4 .2L8.5 1L7.4 1.8" fill="none" stroke="#888" stroke-width=".5"/></svg>
<svg class="ic" style="left:437.3px;top:135.5px" width="2.6" height="1.7" viewBox="0 0 2.6 1.7"><path d="M0 0H2.6L1.3 1.7Z" fill="#aaa"/></svg>
<div class="t" style="left:447.80px;top:129.60px;font-size:8px;line-height:12px;color:#888;letter-spacing:-0.093px;">Aa</div>
<svg class="ic" style="left:459.7px;top:135.5px" width="2.6" height="1.7" viewBox="0 0 2.6 1.7"><path d="M0 0H2.6L1.3 1.7Z" fill="#aaa"/></svg>
<svg class="ic" style="left:470.5px;top:131.5px" width="9" height="8.5" viewBox="0 0 9 8.5"><path d="M8.4 .6L2.6 6.6" stroke="#888" stroke-width="1.1"/><path d="M2.8 5.6L1 8L3.6 6.8Z" fill="#888"/><path d="M.6 2.4H4.2" stroke="#999" stroke-width=".5"/></svg>
<div class="t" style="left:470.80px;top:126.80px;font-size:4.2px;line-height:12px;color:#888;letter-spacing:0.000px;">ab</div>
<svg class="ic" style="left:481.6px;top:135.5px" width="2.6" height="1.7" viewBox="0 0 2.6 1.7"><path d="M0 0H2.6L1.3 1.7Z" fill="#aaa"/></svg>
<div class="t" style="left:492.60px;top:129.20px;font-size:9.5px;line-height:12px;color:#858585;letter-spacing:0.000px;">A</div>
<svg class="ic" style="left:504.8px;top:135.5px" width="2.6" height="1.7" viewBox="0 0 2.6 1.7"><path d="M0 0H2.6L1.3 1.7Z" fill="#aaa"/></svg>
<div class="t" style="left:400.20px;top:150.00px;font-size:6.7px;line-height:12px;color:#666;letter-spacing:-0.477px;">Font</div>
<svg class="ic" style="left:504.5px;top:155px" width="4" height="4" viewBox="0 0 4 4"><path d="M.3 3V.3H3" fill="none" stroke="#aaa" stroke-width=".6"/><path d="M1.6 1.6L3.6 3.6M3.6 2.2V3.6H2.2" fill="none" stroke="#aaa" stroke-width=".6"/></svg>
<svg class="ic" style="left:522px;top:109.5px" width="8" height="8" viewBox="0 0 8 8"><circle cx=".9" cy="1" r=".8" fill="#777"/><circle cx=".9" cy="4" r=".8" fill="#777"/><circle cx=".9" cy="7" r=".8" fill="#777"/><path d="M2.8 1H8M2.8 4H8M2.8 7H8" stroke="#c4c4c4" stroke-width=".7"/></svg>
<svg class="ic" style="left:534.5px;top:112.4px" width="2.4" height="1.6" viewBox="0 0 2.4 1.6"><path d="M0 0H2.4L1.2 1.6Z" fill="#aaa"/></svg>
<svg class="ic" style="left:544px;top:109.5px" width="8" height="8" viewBox="0 0 8 8"><path d="M.8 .2V1.8M.8 3.2V4.8M.8 6.2V7.8" stroke="#888" stroke-width=".6"/><path d="M2.8 1H8M2.8 4H8M2.8 7H8" stroke="#c4c4c4" stroke-width=".7"/></svg>
<svg class="ic" style="left:557px;top:112.4px" width="2.4" height="1.6" viewBox="0 0 2.4 1.6"><path d="M0 0H2.4L1.2 1.6Z" fill="#aaa"/></svg>
<svg class="ic" style="left:568px;top:109.2px" width="8.5" height="8.5" viewBox="0 0 8.5 8.5"><path d="M4.6 .6H8.5M4.6 2.4H8.5M4.6 4.2H8.5M4.6 6H8.5M4.6 7.8H8.5" stroke="#d0d0d0" stroke-width=".7"/><path d="M.2 4.2H3.6" stroke="#888" stroke-width=".8"/><path d="M1.8 2.6L.2 4.2L1.8 5.8" fill="none" stroke="#888" stroke-width=".7"/></svg>
<svg class="ic" style="left:590px;top:109.2px" width="8.5" height="8.5" viewBox="0 0 8.5 8.5"><path d="M4.6 .6H8.5M4.6 2.4H8.5M4.6 4.2H8.5M4.6 6H8.5M4.6 7.8H8.5" stroke="#d0d0d0" stroke-width=".7"/><path d="M.2 4.2H3.6" stroke="#888" stroke-width=".8"/><path d="M1.8 2.6L.2 4.2L1.8 5.8" fill="none" stroke="#888" stroke-width=".7"/></svg>
<svg class="ic" style="left:523px;top:131.1px" width="8" height="9" viewBox="0 0 8 9"><path d="M0 0.5H8M0 2.4H6M0 4.3H8M0 6.199999999999999H6M0 8.1H8" stroke="#c6c6c6" stroke-width=".8"/></svg>
<svg class="ic" style="left:544.5px;top:131.1px" width="8" height="9" viewBox="0 0 8 9"><path d="M0 0.5H8M1 2.4H7M0 4.3H8M1 6.199999999999999H7M0 8.1H8" stroke="#c6c6c6" stroke-width=".8"/></svg>
<svg class="ic" style="left:566px;top:131.1px" width="8" height="9" viewBox="0 0 8 9"><path d="M0 0.5H8M2 2.4H8M0 4.3H8M2 6.199999999999999H8M0 8.1H8" stroke="#c6c6c6" stroke-width=".8"/></svg>
<svg class="ic" style="left:587.5px;top:131.1px" width="8" height="9" viewBox="0 0 8 9"><path d="M0 0.5H8M0 2.4H8M0 4.3H8M0 6.199999999999999H8M0 8.1H8" stroke="#c6c6c6" stroke-width=".8"/></svg>
<div class="t" style="left:565.00px;top:150.00px;font-size:6.7px;line-height:12px;color:#666;letter-spacing:-0.499px;">Paragraph</div>
<div class="abs" style="left:309.5px;top:161px;width:0.8px;height:402px;background:#d9d9d9;"></div>
<div class="t" style="left:167.80px;top:169.40px;font-size:8.2px;line-height:12px;color:#444;letter-spacing:0.000px;">1</div>
<div class="t" style="left:167.80px;top:268.40px;font-size:8.2px;line-height:12px;color:#c2482a;letter-spacing:0.000px;">2</div>
<div class="t" style="left:167.80px;top:367.20px;font-size:8.2px;line-height:12px;color:#444;letter-spacing:0.000px;">3</div>
<div class="t" style="left:167.80px;top:466.30px;font-size:8.2px;line-height:12px;color:#444;letter-spacing:0.000px;">4</div>
<div class="abs" style="left:180.8px;top:172px;width:116.5px;height:86.8px;background:#fff;"></div>
<div class="t" style="left:208.80px;top:202.60px;font-size:7.4px;line-height:12px;color:#222;letter-spacing:-0.192px;">BK Connect Report</div>
<div class="abs" style="left:179.7px;top:269.2px;width:118.7px;height:89.5px;background:#fff;border:1.2px solid #c8502f"></div>
<svg class="ic" style="left:180.8px;top:270.3px" width="116.5" height="87.4" viewBox="0 0 116.5 87.4"><rect x="0" y="0" width="116.5" height="87.4" fill="#fff"/><text x="58.2" y="4.6" font-size="2.35" text-anchor="middle" fill="#444" font-family="Liberation Sans, sans-serif">Order Extraction: J0002</text><text x="30.8" y="8.1" font-size="1.8" text-anchor="middle" fill="#777" font-family="Liberation Sans, sans-serif">RHS Outer Ear</text><rect x="2.6" y="9.0" width="54.4" height="12.1" fill="none" stroke="#b9cce4" stroke-width=".35"/><path d="M3.1 10.3H8.6" stroke="#f0564f" stroke-width=".5"/><path d="M10.1 10.3H34.6" stroke="#9a9a9a" stroke-width=".5"/><path d="M3.1 12.7H8.6" stroke="#4a4ae8" stroke-width=".5"/><path d="M10.1 12.7H32.6" stroke="#9a9a9a" stroke-width=".5"/><path d="M3.1 15.1H8.6" stroke="#4c9a52" stroke-width=".5"/><path d="M10.1 15.1H34.6" stroke="#9a9a9a" stroke-width=".5"/><path d="M3.1 17.5H8.6" stroke="#f03ce8" stroke-width=".5"/><path d="M10.1 17.5H32.6" stroke="#9a9a9a" stroke-width=".5"/><path d="M3.1 19.8H8.6" stroke="#b070e6" stroke-width=".5"/><path d="M10.1 19.8H34.6" stroke="#9a9a9a" stroke-width=".5"/><text x="86.8" y="8.1" font-size="1.8" text-anchor="middle" fill="#777" font-family="Liberation Sans, sans-serif">RHS Outer Ear</text><rect x="57.2" y="9.0" width="57.3" height="12.1" fill="none" stroke="#b9cce4" stroke-width=".35"/><path d="M57.7 10.3H63.2" stroke="#f0564f" stroke-width=".5"/><path d="M64.7 10.3H89.2" stroke="#9a9a9a" stroke-width=".5"/><path d="M57.7 12.7H63.2" stroke="#4a4ae8" stroke-width=".5"/><path d="M64.7 12.7H87.2" stroke="#9a9a9a" stroke-width=".5"/><path d="M57.7 15.1H63.2" stroke="#4c9a52" stroke-width=".5"/><path d="M64.7 15.1H89.2" stroke="#9a9a9a" stroke-width=".5"/><path d="M57.7 17.5H63.2" stroke="#f03ce8" stroke-width=".5"/><path d="M64.7 17.5H87.2" stroke="#9a9a9a" stroke-width=".5"/><path d="M57.7 19.8H63.2" stroke="#b070e6" stroke-width=".5"/><path d="M64.7 19.8H89.2" stroke="#9a9a9a" stroke-width=".5"/><path d="M16.5 21.8V85.3" stroke="#e2e2e2" stroke-width=".35"/><path d="M28.4 21.8V85.3" stroke="#e2e2e2" stroke-width=".35"/><path d="M40.4 21.8V85.3" stroke="#e2e2e2" stroke-width=".35"/><path d="M52.3 21.8V85.3" stroke="#e2e2e2" stroke-width=".35"/><path d="M4.6 42.4H57.0" stroke="#e2e2e2" stroke-width=".35"/><path d="M4.6 65.1H57.0" stroke="#e2e2e2" stroke-width=".35"/><path d="M4.6 21.8V85.3" stroke="#666" stroke-width=".5"/><path d="M73.8 21.8V85.3" stroke="#e2e2e2" stroke-width=".35"/><path d="M85.7 21.8V85.3" stroke="#e2e2e2" stroke-width=".35"/><path d="M97.7 21.8V85.3" stroke="#e2e2e2" stroke-width=".35"/><path d="M109.7 21.8V85.3" stroke="#e2e2e2" stroke-width=".35"/><path d="M61.8 42.4H114.5" stroke="#e2e2e2" stroke-width=".35"/><path d="M61.8 65.1H114.5" stroke="#e2e2e2" stroke-width=".35"/><path d="M61.8 21.8V85.3" stroke="#666" stroke-width=".5"/><path d="M31.5 21.8V85.3" stroke="#a0409a" stroke-width=".5" stroke-dasharray="1 .8"/><path d="M87.8 21.8V85.3" stroke="#a0409a" stroke-width=".5" stroke-dasharray="1 .8"/><path d="M4.6 80.7H57.0" stroke="#a98bb5" stroke-width="1.5"/><polyline points="5.0,53.2 8.3,54.3 11.5,59.7 13.7,46.7 15.9,45.6 18.0,57.5 21.3,69.5 24.5,74.9 26.7,66.2 28.9,46.7 31.0,38.0 33.2,51.0 36.5,41.3 38.6,27.2 40.8,24.0 43.0,27.2 46.2,31.5 49.5,33.7 51.6,30.5 54.9,24.0 57.0,25.0" fill="none" stroke="#f0564f" stroke-width="0.7" stroke-linejoin="round" /><polyline points="5.0,77.0 7.2,61.9 9.4,59.7 11.5,66.2 13.7,61.9 15.9,70.5 19.1,59.7 21.3,57.5 23.5,68.4 25.6,61.9 27.8,48.9 30.0,38.0 32.1,37.0 34.3,42.4 36.5,46.7 38.6,38.0 40.8,29.4 43.0,27.2 45.1,35.9 47.3,44.5 49.5,42.4 51.6,37.0 53.8,38.0 57.0,46.7" fill="none" stroke="#4c9a52" stroke-width="0.7" stroke-linejoin="round" /><polyline points="5.0,72.7 6.1,81.4 8.3,70.5 10.5,66.2 13.7,70.5 15.9,79.2 18.0,77.0 20.2,66.2 22.4,70.5 24.5,68.4 26.7,61.9 28.9,59.7 31.0,51.0 33.2,48.9 35.4,44.5 37.5,33.7 39.7,26.1 41.9,22.9 44.0,24.0 46.2,29.4 48.4,38.0 50.5,40.2 52.7,35.9 54.9,34.8" fill="none" stroke="#f03ce8" stroke-width="0.7" stroke-linejoin="round" /><polyline points="5.0,70.5 6.1,84.6 7.2,85.3" fill="none" stroke="#4a4ae8" stroke-width="0.7" stroke-linejoin="round" /><polyline points="17.0,85.3 19.1,76.0 21.3,73.8 24.5,77.0 26.7,74.9 28.9,66.2 31.0,53.2 33.2,50.0 35.4,53.2 38.6,51.0 40.8,52.1 43.0,51.0 45.1,56.5 47.3,46.7 49.5,43.5 51.6,39.1 53.8,40.2 56.0,43.5" fill="none" stroke="#4a4ae8" stroke-width="0.7" stroke-linejoin="round" /><polyline points="31.0,85.3 33.2,74.9 35.4,64.0 37.5,63.0 39.7,69.5 41.9,77.0 45.1,78.1 47.3,68.4 48.4,56.5 50.5,55.4 52.7,59.7 54.9,70.5 56.0,57.5 57.0,54.3" fill="none" stroke="#b070e6" stroke-width="0.7" stroke-linejoin="round" /><polyline points="61.8,59.7 64.6,58.6 66.8,61.9 69.0,68.4 71.1,66.2 73.3,68.4 76.5,74.9 79.8,76.0 82.0,66.2 84.1,48.9 86.3,41.3 88.5,45.6 90.6,51.0 92.8,47.8 95.0,44.5 97.1,46.7 99.3,53.2 101.5,43.5 103.6,39.1 105.8,34.8 108.0,30.5 110.1,25.0 112.3,22.9 113.8,25.0" fill="none" stroke="#f0564f" stroke-width="0.7" stroke-linejoin="round" /><polyline points="61.8,77.0 63.5,66.2 65.7,64.0 67.9,68.4 70.0,71.6 72.2,66.2 74.4,64.0 77.6,59.7 80.9,52.1 83.0,48.9 85.2,47.8 87.4,53.2 89.5,57.5 91.7,48.9 93.9,46.7 96.0,37.0 98.2,34.8 100.4,33.7 102.5,41.3 104.7,47.8 106.9,43.5 109.0,38.0 111.2,34.8 113.8,40.2" fill="none" stroke="#4c9a52" stroke-width="0.7" stroke-linejoin="round" /><polyline points="61.8,79.2 63.5,83.5 65.7,72.7 67.9,68.4 70.0,74.9 72.2,77.0 74.4,70.5 76.5,66.2 78.7,59.7 80.9,57.5 83.0,53.2 85.2,51.0 87.4,50.0 89.5,53.2 91.7,57.5 93.9,64.0 96.0,55.4 98.2,48.9 100.4,46.7 102.5,57.5 104.7,68.4 106.9,53.2 109.0,44.5 111.2,40.2 112.9,44.5" fill="none" stroke="#f03ce8" stroke-width="0.7" stroke-linejoin="round" /><polyline points="61.8,81.4 63.5,85.3" fill="none" stroke="#4a4ae8" stroke-width="0.7" stroke-linejoin="round" /><polyline points="72.2,85.3 74.4,77.0 76.5,72.7 78.7,81.4 80.9,83.5 83.0,74.9 85.2,64.0 87.4,59.7 89.5,57.5 91.7,64.0 93.9,60.8 96.0,59.7 98.2,58.6 100.4,61.9 102.5,68.4 104.7,53.2 106.9,46.7 109.0,48.9 111.2,38.0 112.9,46.7" fill="none" stroke="#4a4ae8" stroke-width="0.7" stroke-linejoin="round" /><polyline points="87.4,85.3 90.6,68.4 92.8,61.9 95.0,66.2 97.1,78.1 99.3,72.7 101.5,59.7 103.6,55.4 105.8,56.5 108.0,57.5 110.1,59.7 111.6,68.4 112.9,57.5 113.8,57.5" fill="none" stroke="#b070e6" stroke-width="0.7" stroke-linejoin="round" /></svg>
<svg class="ic" style="left:180.8px;top:369.3px" width="116.5" height="87.4" viewBox="0 0 116.5 87.4"><rect x="0" y="0" width="116.5" height="87.4" fill="#fff"/><text x="58.2" y="4.6" font-size="2.35" text-anchor="middle" fill="#444" font-family="Liberation Sans, sans-serif">Order Extraction: J0002</text><text x="30.8" y="8.1" font-size="1.8" text-anchor="middle" fill="#777" font-family="Liberation Sans, sans-serif">RHS Outer Ear</text><rect x="2.6" y="9.0" width="54.4" height="12.1" fill="none" stroke="#b9cce4" stroke-width=".35"/><path d="M3.1 10.3H8.6" stroke="#f0564f" stroke-width=".5"/><path d="M10.1 10.3H34.6" stroke="#9a9a9a" stroke-width=".5"/><path d="M3.1 12.7H8.6" stroke="#4a4ae8" stroke-width=".5"/><path d="M10.1 12.7H32.6" stroke="#9a9a9a" stroke-width=".5"/><path d="M3.1 15.1H8.6" stroke="#4c9a52" stroke-width=".5"/><path d="M10.1 15.1H34.6" stroke="#9a9a9a" stroke-width=".5"/><path d="M3.1 17.5H8.6" stroke="#f03ce8" stroke-width=".5"/><path d="M10.1 17.5H32.6" stroke="#9a9a9a" stroke-width=".5"/><path d="M3.1 19.8H8.6" stroke="#b070e6" stroke-width=".5"/><path d="M10.1 19.8H34.6" stroke="#9a9a9a" stroke-width=".5"/><text x="86.8" y="8.1" font-size="1.8" text-anchor="middle" fill="#777" font-family="Liberation Sans, sans-serif">RHS Outer Ear</text><rect x="57.2" y="9.0" width="57.3" height="12.1" fill="none" stroke="#b9cce4" stroke-width=".35"/><path d="M57.7 10.3H63.2" stroke="#f0564f" stroke-width=".5"/><path d="M64.7 10.3H89.2" stroke="#9a9a9a" stroke-width=".5"/><path d="M57.7 12.7H63.2" stroke="#4a4ae8" stroke-width=".5"/><path d="M64.7 12.7H87.2" stroke="#9a9a9a" stroke-width=".5"/><path d="M57.7 15.1H63.2" stroke="#4c9a52" stroke-width=".5"/><path d="M64.7 15.1H89.2" stroke="#9a9a9a" stroke-width=".5"/><path d="M57.7 17.5H63.2" stroke="#f03ce8" stroke-width=".5"/><path d="M64.7 17.5H87.2" stroke="#9a9a9a" stroke-width=".5"/><path d="M57.7 19.8H63.2" stroke="#b070e6" stroke-width=".5"/><path d="M64.7 19.8H89.2" stroke="#9a9a9a" stroke-width=".5"/><path d="M16.5 21.8V85.3" stroke="#e2e2e2" stroke-width=".35"/><path d="M28.4 21.8V85.3" stroke="#e2e2e2" stroke-width=".35"/><path d="M40.4 21.8V85.3" stroke="#e2e2e2" stroke-width=".35"/><path d="M52.3 21.8V85.3" stroke="#e2e2e2" stroke-width=".35"/><path d="M4.6 42.4H57.0" stroke="#e2e2e2" stroke-width=".35"/><path d="M4.6 65.1H57.0" stroke="#e2e2e2" stroke-width=".35"/><path d="M4.6 21.8V85.3" stroke="#666" stroke-width=".5"/><path d="M73.8 21.8V85.3" stroke="#e2e2e2" stroke-width=".35"/><path d="M85.7 21.8V85.3" stroke="#e2e2e2" stroke-width=".35"/><path d="M97.7 21.8V85.3" stroke="#e2e2e2" stroke-width=".35"/><path d="M109.7 21.8V85.3" stroke="#e2e2e2" stroke-width=".35"/><path d="M61.8 42.4H114.5" stroke="#e2e2e2" stroke-width=".35"/><path d="M61.8 65.1H114.5" stroke="#e2e2e2" stroke-width=".35"/><path d="M61.8 21.8V85.3" stroke="#666" stroke-width=".5"/><path d="M10.7 21.8V85.3" stroke="#a0409a" stroke-width=".5" stroke-dasharray="1 .8"/><polyline points="5.0,53.2 8.3,54.3 11.5,59.7 13.7,46.7 15.9,45.6 18.0,57.5 21.3,69.5 24.5,74.9 26.7,66.2 28.9,46.7 31.0,38.0 33.2,51.0 36.5,41.3 38.6,27.2 40.8,24.0 43.0,27.2 46.2,31.5 49.5,33.7 51.6,30.5 54.9,24.0 57.0,25.0" fill="none" stroke="#f0564f" stroke-width="0.7" stroke-linejoin="round" /><polyline points="5.0,77.0 7.2,61.9 9.4,59.7 11.5,66.2 13.7,61.9 15.9,70.5 19.1,59.7 21.3,57.5 23.5,68.4 25.6,61.9 27.8,48.9 30.0,38.0 32.1,37.0 34.3,42.4 36.5,46.7 38.6,38.0 40.8,29.4 43.0,27.2 45.1,35.9 47.3,44.5 49.5,42.4 51.6,37.0 53.8,38.0 57.0,46.7" fill="none" stroke="#4c9a52" stroke-width="0.7" stroke-linejoin="round" /><polyline points="5.0,72.7 6.1,81.4 8.3,70.5 10.5,66.2 13.7,70.5 15.9,79.2 18.0,77.0 20.2,66.2 22.4,70.5 24.5,68.4 26.7,61.9 28.9,59.7 31.0,51.0 33.2,48.9 35.4,44.5 37.5,33.7 39.7,26.1 41.9,22.9 44.0,24.0 46.2,29.4 48.4,38.0 50.5,40.2 52.7,35.9 54.9,34.8" fill="none" stroke="#f03ce8" stroke-width="0.7" stroke-linejoin="round" /><polyline points="5.0,70.5 6.1,84.6 7.2,85.3" fill="none" stroke="#4a4ae8" stroke-width="0.7" stroke-linejoin="round" /><polyline points="17.0,85.3 19.1,76.0 21.3,73.8 24.5,77.0 26.7,74.9 28.9,66.2 31.0,53.2 33.2,50.0 35.4,53.2 38.6,51.0 40.8,52.1 43.0,51.0 45.1,56.5 47.3,46.7 49.5,43.5 51.6,39.1 53.8,40.2 56.0,43.5" fill="none" stroke="#4a4ae8" stroke-width="0.7" stroke-linejoin="round" /><polyline points="31.0,85.3 33.2,74.9 35.4,64.0 37.5,63.0 39.7,69.5 41.9,77.0 45.1,78.1 47.3,68.4 48.4,56.5 50.5,55.4 52.7,59.7 54.9,70.5 56.0,57.5 57.0,54.3" fill="none" stroke="#b070e6" stroke-width="0.7" stroke-linejoin="round" /><polyline points="61.8,59.7 64.6,58.6 66.8,61.9 69.0,68.4 71.1,66.2 73.3,68.4 76.5,74.9 79.8,76.0 82.0,66.2 84.1,48.9 86.3,41.3 88.5,45.6 90.6,51.0 92.8,47.8 95.0,44.5 97.1,46.7 99.3,53.2 101.5,43.5 103.6,39.1 105.8,34.8 108.0,30.5 110.1,25.0 112.3,22.9 113.8,25.0" fill="none" stroke="#f0564f" stroke-width="0.7" stroke-linejoin="round" /><polyline points="61.8,77.0 63.5,66.2 65.7,64.0 67.9,68.4 70.0,71.6 72.2,66.2 74.4,64.0 77.6,59.7 80.9,52.1 83.0,48.9 85.2,47.8 87.4,53.2 89.5,57.5 91.7,48.9 93.9,46.7 96.0,37.0 98.2,34.8 100.4,33.7 102.5,41.3 104.7,47.8 106.9,43.5 109.0,38.0 111.2,34.8 113.8,40.2" fill="none" stroke="#4c9a52" stroke-width="0.7" stroke-linejoin="round" /><polyline points="61.8,79.2 63.5,83.5 65.7,72.7 67.9,68.4 70.0,74.9 72.2,77.0 74.4,70.5 76.5,66.2 78.7,59.7 80.9,57.5 83.0,53.2 85.2,51.0 87.4,50.0 89.5,53.2 91.7,57.5 93.9,64.0 96.0,55.4 98.2,48.9 100.4,46.7 102.5,57.5 104.7,68.4 106.9,53.2 109.0,44.5 111.2,40.2 112.9,44.5" fill="none" stroke="#f03ce8" stroke-width="0.7" stroke-linejoin="round" /><polyline points="61.8,81.4 63.5,85.3" fill="none" stroke="#4a4ae8" stroke-width="0.7" stroke-linejoin="round" /><polyline points="72.2,85.3 74.4,77.0 76.5,72.7 78.7,81.4 80.9,83.5 83.0,74.9 85.2,64.0 87.4,59.7 89.5,57.5 91.7,64.0 93.9,60.8 96.0,59.7 98.2,58.6 100.4,61.9 102.5,68.4 104.7,53.2 106.9,46.7 109.0,48.9 111.2,38.0 112.9,46.7" fill="none" stroke="#4a4ae8" stroke-width="0.7" stroke-linejoin="round" /><polyline points="87.4,85.3 90.6,68.4 92.8,61.9 95.0,66.2 97.1,78.1 99.3,72.7 101.5,59.7 103.6,55.4 105.8,56.5 108.0,57.5 110.1,59.7 111.6,68.4 112.9,57.5 113.8,57.5" fill="none" stroke="#b070e6" stroke-width="0.7" stroke-linejoin="round" /></svg>
<svg class="ic" style="left:180.8px;top:468.3px" width="116.5" height="86.7" viewBox="0 0 116.5 86.7"><rect x="0" y="0" width="116.5" height="86.7" fill="#fff"/><rect x="1.5" y="4.6" width="113.5" height="2.4" fill="#e6ecf7" stroke="#c5d3ea" stroke-width=".35"/><path d="M2.2 5.8H8" stroke="#7a7af0" stroke-width="1.3"/><path d="M9 5.8H17" stroke="#999" stroke-width=".6"/><text x="58" y="3.3" font-size="1.8" text-anchor="middle" fill="#777" font-family="Liberation Sans, sans-serif">Tacho</text><path d="M15.5 9V86.7" stroke="#c8c8c8" stroke-width=".45"/><path d="M42.5 9V86.7" stroke="#c8c8c8" stroke-width=".45"/><path d="M69.5 9V86.7" stroke="#c8c8c8" stroke-width=".45"/><path d="M96.5 9V86.7" stroke="#c8c8c8" stroke-width=".45"/><path d="M4 19.5H116" stroke="#c8c8c8" stroke-width=".45"/><path d="M4 47H116" stroke="#c8c8c8" stroke-width=".45"/><path d="M4 74.5H116" stroke="#c8c8c8" stroke-width=".45"/><path d="M4.4 8.6V86.7" stroke="#444" stroke-width=".8"/><polyline points="4.2,7.7 8.5,9.0 12.5,15.0 16.5,20.0 20.9,31.7 24.2,45.0 26.5,60.0 29.2,66.0 31.2,45.0 33.2,28.4 35.2,20.0 37.5,19.4 39.9,28.4 43.2,45.0 46.5,58.4 49.2,65.0 51.9,66.0 54.5,75.0 57.9,86.7" fill="none" stroke="#8080f2" stroke-width="1.0" stroke-linejoin="round" /><polyline points="75.9,86.7 77.9,68.4 80.5,53.4 83.9,46.0 87.5,50.0 91.9,56.7 95.9,65.0 99.2,71.7 101.9,74.4 104.5,74.4 106.5,65.0 108.5,55.7 111.2,54.4 113.2,46.7 114.9,45.0" fill="none" stroke="#8080f2" stroke-width="1.0" stroke-linejoin="round" /></svg>
<div class="abs" style="left:161px;top:564px;width:439px;height:17.6px;background:#f1f1f1;"></div>
<div class="t" style="left:166.00px;top:566.90px;font-size:6.5px;line-height:12px;color:#555;letter-spacing:-0.210px;">Slide 2 of 4</div>
<svg class="ic" style="left:210px;top:568.8px" width="8.5" height="7.5" viewBox="0 0 8.5 7.5"><rect x=".4" y=".4" width="6.4" height="6.4" fill="none" stroke="#666" stroke-width=".7"/><path d="M3.4 .4V6.8" stroke="#666" stroke-width=".6"/><path d="M7.8 1.2L4.8 5.4L4.4 6.6L5.6 6.2L8.4 2Z" fill="#555"/></svg>
<svg class="ic" style="left:312.3px;top:180px" width="8.2" height="354" viewBox="0 0 8.2 354"><rect x="0" y="0" width="8.2" height="354" fill="#fff"/><path d="M3.5 5.4H4.7" stroke="#aaa" stroke-width=".6"/><path d="M2.8 11.3H5.4" stroke="#777" stroke-width=".8"/><path d="M3.5 17.2H4.7" stroke="#aaa" stroke-width=".6"/><path d="M3.5 23.1H4.7" stroke="#aaa" stroke-width=".6"/><path d="M3.5 29.0H4.7" stroke="#aaa" stroke-width=".6"/><path d="M3.5 40.9H4.7" stroke="#aaa" stroke-width=".6"/><path d="M3.5 46.8H4.7" stroke="#aaa" stroke-width=".6"/><path d="M3.5 52.7H4.7" stroke="#aaa" stroke-width=".6"/><path d="M2.8 58.6H5.4" stroke="#777" stroke-width=".8"/><path d="M3.5 64.5H4.7" stroke="#aaa" stroke-width=".6"/><path d="M3.5 70.5H4.7" stroke="#aaa" stroke-width=".6"/><path d="M3.5 76.4H4.7" stroke="#aaa" stroke-width=".6"/><path d="M3.5 88.2H4.7" stroke="#aaa" stroke-width=".6"/><path d="M3.5 94.1H4.7" stroke="#aaa" stroke-width=".6"/><path d="M3.5 100.1H4.7" stroke="#aaa" stroke-width=".6"/><path d="M2.8 106.0H5.4" stroke="#777" stroke-width=".8"/><path d="M3.5 111.9H4.7" stroke="#aaa" stroke-width=".6"/><path d="M3.5 117.8H4.7" stroke="#aaa" stroke-width=".6"/><path d="M3.5 123.7H4.7" stroke="#aaa" stroke-width=".6"/><path d="M3.5 135.6H4.7" stroke="#aaa" stroke-width=".6"/><path d="M3.5 141.5H4.7" stroke="#aaa" stroke-width=".6"/><path d="M3.5 147.4H4.7" stroke="#aaa" stroke-width=".6"/><path d="M2.8 153.3H5.4" stroke="#777" stroke-width=".8"/><path d="M3.5 159.2H4.7" stroke="#aaa" stroke-width=".6"/><path d="M3.5 165.2H4.7" stroke="#aaa" stroke-width=".6"/><path d="M3.5 171.1H4.7" stroke="#aaa" stroke-width=".6"/><path d="M3.5 182.9H4.7" stroke="#aaa" stroke-width=".6"/><path d="M3.5 188.8H4.7" stroke="#aaa" stroke-width=".6"/><path d="M3.5 194.8H4.7" stroke="#aaa" stroke-width=".6"/><path d="M2.8 200.7H5.4" stroke="#777" stroke-width=".8"/><path d="M3.5 206.6H4.7" stroke="#aaa" stroke-width=".6"/><path d="M3.5 212.5H4.7" stroke="#aaa" stroke-width=".6"/><path d="M3.5 218.4H4.7" stroke="#aaa" stroke-width=".6"/><path d="M3.5 230.3H4.7" stroke="#aaa" stroke-width=".6"/><path d="M3.5 236.2H4.7" stroke="#aaa" stroke-width=".6"/><path d="M3.5 242.1H4.7" stroke="#aaa" stroke-width=".6"/><path d="M2.8 248.0H5.4" stroke="#777" stroke-width=".8"/><path d="M3.5 253.9H4.7" stroke="#aaa" stroke-width=".6"/><path d="M3.5 259.9H4.7" stroke="#aaa" stroke-width=".6"/><path d="M3.5 265.8H4.7" stroke="#aaa" stroke-width=".6"/><path d="M3.5 277.6H4.7" stroke="#aaa" stroke-width=".6"/><path d="M3.5 283.5H4.7" stroke="#aaa" stroke-width=".6"/><path d="M3.5 289.5H4.7" stroke="#aaa" stroke-width=".6"/><path d="M2.8 295.4H5.4" stroke="#777" stroke-width=".8"/><path d="M3.5 301.3H4.7" stroke="#aaa" stroke-width=".6"/><path d="M3.5 307.2H4.7" stroke="#aaa" stroke-width=".6"/><path d="M3.5 313.1H4.7" stroke="#aaa" stroke-width=".6"/><path d="M3.5 325.0H4.7" stroke="#aaa" stroke-width=".6"/><path d="M3.5 330.9H4.7" stroke="#aaa" stroke-width=".6"/><path d="M3.5 336.8H4.7" stroke="#aaa" stroke-width=".6"/><path d="M2.8 342.7H5.4" stroke="#777" stroke-width=".8"/><path d="M3.5 348.6H4.7" stroke="#aaa" stroke-width=".6"/><text transform="translate(6 34.9) rotate(-90)" font-size="5.2" text-anchor="middle" fill="#555" font-family="Liberation Sans, sans-serif">3</text><text transform="translate(6 82.3) rotate(-90)" font-size="5.2" text-anchor="middle" fill="#555" font-family="Liberation Sans, sans-serif">2</text><text transform="translate(6 129.7) rotate(-90)" font-size="5.2" text-anchor="middle" fill="#555" font-family="Liberation Sans, sans-serif">1</text><text transform="translate(6 177.0) rotate(-90)" font-size="5.2" text-anchor="middle" fill="#c2482a" font-family="Liberation Sans, sans-serif">0</text><text transform="translate(6 224.3) rotate(-90)" font-size="5.2" text-anchor="middle" fill="#555" font-family="Liberation Sans, sans-serif">1</text><text transform="translate(6 271.7) rotate(-90)" font-size="5.2" text-anchor="middle" fill="#555" font-family="Liberation Sans, sans-serif">2</text><text transform="translate(6 319.1) rotate(-90)" font-size="5.2" text-anchor="middle" fill="#555" font-family="Liberation Sans, sans-serif">3</text></svg>
<svg class="ic" style="left:473.3px;top:162px" width="127" height="9.3" viewBox="0 0 127 9.3"><rect x="0" y="0" width="127" height="9.3" fill="#fff"/><path d="M5.8 4.1V5.2" stroke="#aaa" stroke-width=".6"/><path d="M11.7 4.1V5.2" stroke="#aaa" stroke-width=".6"/><path d="M17.6 4.1V5.2" stroke="#aaa" stroke-width=".6"/><path d="M23.5 3.2V6" stroke="#777" stroke-width=".8"/><path d="M29.4 4.1V5.2" stroke="#aaa" stroke-width=".6"/><path d="M35.4 4.1V5.2" stroke="#aaa" stroke-width=".6"/><path d="M41.3 4.1V5.2" stroke="#aaa" stroke-width=".6"/><path d="M53.1 4.1V5.2" stroke="#aaa" stroke-width=".6"/><path d="M59.0 4.1V5.2" stroke="#aaa" stroke-width=".6"/><path d="M65.0 4.1V5.2" stroke="#aaa" stroke-width=".6"/><path d="M70.9 3.2V6" stroke="#777" stroke-width=".8"/><path d="M76.8 4.1V5.2" stroke="#aaa" stroke-width=".6"/><path d="M82.7 4.1V5.2" stroke="#aaa" stroke-width=".6"/><path d="M88.6 4.1V5.2" stroke="#aaa" stroke-width=".6"/><path d="M100.5 4.1V5.2" stroke="#aaa" stroke-width=".6"/><path d="M106.4 4.1V5.2" stroke="#aaa" stroke-width=".6"/><path d="M112.3 4.1V5.2" stroke="#aaa" stroke-width=".6"/><path d="M118.2 3.2V6" stroke="#777" stroke-width=".8"/><path d="M124.1 4.1V5.2" stroke="#aaa" stroke-width=".6"/><text x="47.2" y="6.7" font-size="5.8" text-anchor="middle" fill="#555" font-family="Liberation Sans, sans-serif">4</text><text x="94.5" y="6.7" font-size="5.8" text-anchor="middle" fill="#555" font-family="Liberation Sans, sans-serif">3</text></svg>
<div class="abs" style="left:472.6px;top:180px;width:128px;height:353.9px;background:#fff;"></div>
<div class="t" style="left:567.60px;top:201.40px;font-size:8.3px;line-height:12px;color:#222;letter-spacing:-0.050px;">RHS Inner Ear</div>
<div class="abs" style="left:476.4px;top:214.2px;width:130px;height:45.2px;background:#fff;border:.8px solid #bcd0ea;border-radius:2px"></div>
<div class="abs" style="left:478.7px;top:218.5px;width:21.2px;height:0.8px;background:#f58a86;"></div>
<div class="t" style="left:503.00px;top:213.80px;font-size:6.9px;line-height:12px;color:#333;letter-spacing:-0.303px;">Blackcar 3rd Gear, (Tach), SPL, Jkun</div>
<div class="abs" style="left:478.7px;top:227.4px;width:21.2px;height:0.8px;background:#8a8af0;"></div>
<div class="t" style="left:503.00px;top:222.70px;font-size:6.9px;line-height:12px;color:#333;letter-spacing:-0.295px;">Bluecar 3rd Gear, (Tach), SPL, Jkun</div>
<div class="abs" style="left:478.7px;top:236.3px;width:21.2px;height:0.8px;background:#86b98a;"></div>
<div class="t" style="left:503.00px;top:231.60px;font-size:6.9px;line-height:12px;color:#333;letter-spacing:-0.280px;">Greencar 3rd Gear, (Tach), SPL, Jkun</div>
<div class="abs" style="left:478.7px;top:245.20000000000002px;width:21.2px;height:0.8px;background:#f58af0;"></div>
<div class="t" style="left:503.00px;top:240.50px;font-size:6.9px;line-height:12px;color:#333;letter-spacing:-0.300px;">Redcar 3rd Gear, (Tach), SPL, Jkun</div>
<div class="abs" style="left:478.7px;top:254.1px;width:21.2px;height:0.8px;background:#c9a6f0;"></div>
<div class="t" style="left:503.00px;top:249.40px;font-size:6.9px;line-height:12px;color:#333;letter-spacing:-0.256px;">Yellowcar 3rd Gear, (Tach), SPL, Jkun</div>
<svg class="ic" style="left:477.8px;top:253px" width="3" height="3" viewBox="0 0 3 3"><circle cx="1.5" cy="1.5" r="1.45" fill="#5a10d0"/></svg>
<div class="t" style="left:476.50px;top:257.80px;font-size:6.7px;line-height:12px;color:#333;letter-spacing:-0.068px;">[dB(A)/20u Pa]</div>
<svg class="ic" style="left:473.2px;top:266px" width="127" height="265" viewBox="0 0 127 265"><path d="M27.1 0.6V264.7" stroke="#e0e0e0" stroke-width=".6"/><path d="M63.8 0.6V264.7" stroke="#e0e0e0" stroke-width=".6"/><path d="M100.6 0.6V264.7" stroke="#e0e0e0" stroke-width=".6"/><path d="M16 87.4H127" stroke="#e0e0e0" stroke-width=".6"/><path d="M14.6 87.4H16" stroke="#777" stroke-width=".6"/><path d="M16 183.5H127" stroke="#e0e0e0" stroke-width=".6"/><path d="M14.6 183.5H16" stroke="#777" stroke-width=".6"/><path d="M126.2 0.6V264.7" stroke="#b060b0" stroke-width=".6" stroke-dasharray="1 1"/><path d="M16 0.6V264.7" stroke="#808080" stroke-width="1.3"/><path d="M16.6 242.9H127" stroke="#a98bb5" stroke-width=".9"/><clipPath id="pc"><rect x="15" y="0" width="112" height="264.7"/></clipPath><g clip-path="url(#pc)"><polyline points="19.6,133.0 23.1,130.5 26.6,136.5 30.1,136.8 34.6,148.0 38.1,156.8 40.6,179.5 45.1,192.8 48.6,127.0 52.8,100.8 56.3,98.0 59.8,116.5 63.3,132.3 66.8,139.3 71.0,156.8 74.5,157.5 78.0,155.7 81.5,169.0 85.0,193.5 89.6,210.3 93.1,190.0 96.6,190.0 98.3,211.0 100.8,234.5 103.6,228.5 106.0,204.0 108.8,151.5 112.3,116.5 115.8,99.0 118.6,88.5 126.7,92.7" fill="none" stroke="#f2605a" stroke-width="0.75" stroke-linejoin="round" /><polyline points="19.6,253.0 22.0,221.5 26.6,158.5 30.1,156.8 33.6,179.5 37.8,171.5 41.3,176.0 45.1,181.3 48.6,169.0 52.1,149.8 54.6,169.0 58.1,177.8 61.6,193.5 65.1,218.0 68.6,265.3" fill="none" stroke="#559c5a" stroke-width="0.75" stroke-linejoin="round" /><polyline points="75.6,265.3 79.1,218.0 84.3,183.0 89.6,151.5 94.8,113.0 98.3,100.8 101.8,98.0 103.6,99.0 107.1,111.3 110.6,109.5 115.1,123.5 117.6,102.5 121.1,71.0 123.5,57.0" fill="none" stroke="#559c5a" stroke-width="0.75" stroke-linejoin="round" /><polyline points="19.6,205.1 23.1,246.0 26.6,221.5 30.1,200.5 33.6,184.8 37.8,174.3 41.3,190.0 45.1,208.6 48.6,184.8 52.8,176.0 58.1,169.0 63.3,163.1 68.6,170.8 73.8,177.8 79.1,181.3 82.6,181.3 86.1,176.0 91.3,163.8 96.6,151.5 100.1,147.0 103.6,151.5 107.1,150.8 110.6,142.8 115.8,130.5 121.1,121.8 126.7,116.5" fill="none" stroke="#f24aea" stroke-width="0.75" stroke-linejoin="round" /><polyline points="19.6,222.2 20.6,239.0 22.0,265.3" fill="none" stroke="#5050ea" stroke-width="0.75" stroke-linejoin="round" /><polyline points="68.6,265.3 71.0,232.0 73.8,219.8 78.0,215.2 82.6,218.0 86.1,219.8 91.3,219.1 96.6,219.8 100.1,221.5 103.6,218.0 107.1,211.7 110.6,213.8 114.1,200.5 117.6,179.5 121.1,155.0 124.6,134.0 126.7,127.0" fill="none" stroke="#5050ea" stroke-width="0.75" stroke-linejoin="round" /><polyline points="76.6,265.3 79.1,214.5 81.9,198.8 84.3,204.0 87.8,214.5 91.3,219.8 94.8,221.5 97.6,218.0 100.1,195.3 103.6,193.5 107.1,202.3 110.6,204.0 114.1,196.3 115.8,195.3 119.3,211.0 122.8,232.0 126.7,246.0" fill="none" stroke="#b57cea" stroke-width="0.75" stroke-linejoin="round" /></g></svg>
<div class="t" style="left:479.00px;top:347.60px;font-size:6px;line-height:12px;color:#333;letter-spacing:0.313px;">70</div>
<div class="t" style="left:479.00px;top:443.70px;font-size:6px;line-height:12px;color:#333;letter-spacing:0.313px;">60</div>
<div class="abs" style="left:310.3px;top:540.2px;width:290px;height:0;border-top:1px solid #eeeeee"></div>
<div class="t" style="left:316.00px;top:544.00px;font-size:7.8px;line-height:12px;color:#555;letter-spacing:0.376px;">Tap to add notes</div>
<svg class="ic" style="left:350px;top:356.5px" width="10" height="15" viewBox="0 0 10 15"><path d="M.7 .8V11.6L3.4 9.2L5.4 13.8L7.2 13L5.2 8.6H8.8Z" fill="#fff" stroke="#222" stroke-width=".8" stroke-linejoin="round"/></svg>
<div class="abs" style="left:0;top:581.5px;width:600px;height:18.5px;background:linear-gradient(#fefffe,#fbfdfb 30%,#e4f1e6)"></div>
<div class="abs" style="left:0;top:581.2px;width:161px;height:1px;background:#dfe8dd"></div>
<div class="abs" style="left:0;top:598.8px;width:600px;height:1.2px;background:#bccabd"></div>
<div class="abs" style="left:2.3px;top:583.6px;width:40.3px;height:13.6px;border:1px solid #ababab;background:#fcfcfc;border-radius:2px"></div>
<div class="t" style="left:6.60px;top:585.20px;font-size:7.4px;line-height:12px;color:#333;letter-spacing:-0.177px;">Show Log</div>
</div></body></html>
